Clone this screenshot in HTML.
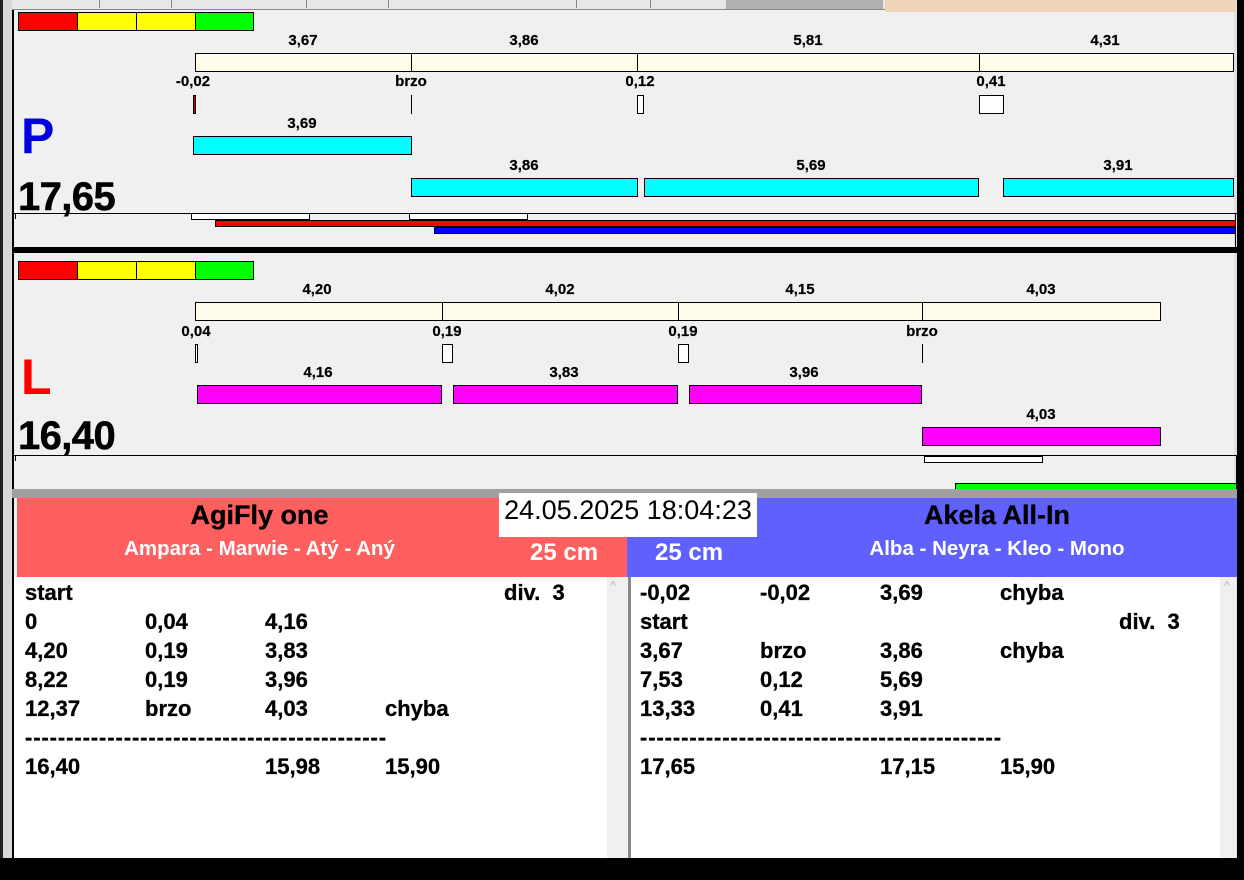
<!DOCTYPE html>
<html><head><meta charset="utf-8"><style>
*{margin:0;padding:0;box-sizing:border-box}
body{width:1244px;height:880px;background:#f0f0f0;position:relative;overflow:hidden;font-family:"Liberation Sans",Arial,sans-serif;font-weight:bold;color:#000}
div{position:absolute}
.b{border:1px solid #000}
.cr{background:#fffdea}
.cy{background:#00ffff}
.mg{background:#ff00ff}
.lb{font-size:15px;width:100px;text-align:center;line-height:17px;-webkit-text-stroke:0.2px #000}
.big{font-size:40px;letter-spacing:-0.6px;line-height:40px;-webkit-text-stroke:0.5px #000}
.row{font-size:22px;line-height:24px;-webkit-text-stroke:0.3px #000}
.dash{letter-spacing:0.9px}
</style></head><body>
<!-- left border -->
<div style="left:0;top:0;width:3px;height:880px;background:#222"></div>
<div style="left:3px;top:0;width:9px;height:880px;background:#d8d8d8"></div>
<div style="left:12px;top:10px;width:2px;height:848px;background:#000"></div>
<div style="left:1236px;top:0;width:8px;height:880px;background:#000"></div>
<div style="left:1234px;top:0;width:3px;height:880px;background:#e0e0e0"></div>
<!-- top tabs -->
<div style="left:12px;top:0;width:873px;height:10px;background:#e8e8e8;border-bottom:1px solid #888"></div>
<div style="left:99px;top:0;width:1px;height:8px;background:#888"></div>
<div style="left:171px;top:0;width:1px;height:8px;background:#888"></div>
<div style="left:306px;top:0;width:1px;height:8px;background:#888"></div>
<div style="left:388px;top:0;width:1px;height:8px;background:#888"></div>
<div style="left:576px;top:0;width:1px;height:8px;background:#888"></div>
<div style="left:650px;top:0;width:1px;height:8px;background:#888"></div>
<div style="left:726px;top:0;width:157px;height:9px;background:#b0b0b0"></div>
<div style="left:885px;top:0;width:350px;height:12px;background:#f0d4b8"></div>

<!-- TOP PANEL P -->
<div class="b" style="left:18px;top:12px;width:60px;height:19px;background:#f00"></div>
<div class="b" style="left:77px;top:12px;width:60px;height:19px;background:#ff0"></div>
<div class="b" style="left:136px;top:12px;width:60px;height:19px;background:#ff0"></div>
<div class="b" style="left:195px;top:12px;width:59px;height:19px;background:#0f0"></div>

<div class="lb" style="left:253px;top:32px">3,67</div>
<div class="lb" style="left:474px;top:32px">3,86</div>
<div class="lb" style="left:758px;top:32px">5,81</div>
<div class="lb" style="left:1055px;top:32px">4,31</div>
<div class="b cr" style="left:195px;top:53px;width:217px;height:19px"></div>
<div class="b cr" style="left:411px;top:53px;width:227px;height:19px"></div>
<div class="b cr" style="left:637px;top:53px;width:343px;height:19px"></div>
<div class="b cr" style="left:979px;top:53px;width:255px;height:19px"></div>

<div class="lb" style="left:143px;top:73px">-0,02</div>
<div class="lb" style="left:361px;top:73px">brzo</div>
<div class="lb" style="left:590px;top:73px">0,12</div>
<div class="lb" style="left:941px;top:73px">0,41</div>
<div class="b" style="left:193px;top:95px;width:3px;height:19px;background:#c00"></div>
<div style="left:411px;top:95px;width:1px;height:19px;background:#000"></div>
<div class="b" style="left:637px;top:95px;width:7px;height:19px;background:#fff"></div>
<div class="b" style="left:979px;top:95px;width:25px;height:19px;background:#fff"></div>

<div style="left:21px;top:108px;font-size:50px;color:#0000e0;line-height:56px">P</div>
<div class="lb" style="left:252px;top:115px">3,69</div>
<div class="b cy" style="left:193px;top:136px;width:219px;height:19px"></div>
<div class="lb" style="left:474px;top:157px">3,86</div>
<div class="lb" style="left:761px;top:157px">5,69</div>
<div class="lb" style="left:1068px;top:157px">3,91</div>
<div class="b cy" style="left:411px;top:178px;width:227px;height:19px"></div>
<div class="b cy" style="left:644px;top:178px;width:335px;height:19px"></div>
<div class="b cy" style="left:1003px;top:178px;width:231px;height:19px"></div>
<div class="big" style="left:18px;top:177px">17,65</div>

<div style="left:14px;top:213px;width:1223px;height:1px;background:#000"></div>
<div style="left:15px;top:213px;width:1px;height:6px;background:#000"></div>
<div class="b" style="left:191px;top:213px;width:119px;height:7px;background:#fff"></div>
<div class="b" style="left:409px;top:213px;width:119px;height:7px;background:#fff"></div>
<div class="b" style="left:215px;top:220px;width:1021px;height:7px;background:#f00"></div>
<div class="b" style="left:434px;top:227px;width:802px;height:7px;background:#00f"></div>
<div style="left:1235px;top:213px;width:1px;height:34px;background:#000"></div>
<div style="left:14px;top:247px;width:1223px;height:6px;background:#000"></div>

<!-- BOTTOM PANEL L -->
<div class="b" style="left:18px;top:261px;width:60px;height:19px;background:#f00"></div>
<div class="b" style="left:77px;top:261px;width:60px;height:19px;background:#ff0"></div>
<div class="b" style="left:136px;top:261px;width:60px;height:19px;background:#ff0"></div>
<div class="b" style="left:195px;top:261px;width:59px;height:19px;background:#0f0"></div>

<div class="lb" style="left:267px;top:281px">4,20</div>
<div class="lb" style="left:510px;top:281px">4,02</div>
<div class="lb" style="left:750px;top:281px">4,15</div>
<div class="lb" style="left:991px;top:281px">4,03</div>
<div class="b cr" style="left:195px;top:302px;width:248px;height:19px"></div>
<div class="b cr" style="left:442px;top:302px;width:237px;height:19px"></div>
<div class="b cr" style="left:678px;top:302px;width:245px;height:19px"></div>
<div class="b cr" style="left:922px;top:302px;width:239px;height:19px"></div>

<div class="lb" style="left:146px;top:323px">0,04</div>
<div class="lb" style="left:397px;top:323px">0,19</div>
<div class="lb" style="left:633px;top:323px">0,19</div>
<div class="lb" style="left:872px;top:323px">brzo</div>
<div class="b" style="left:195px;top:344px;width:3px;height:19px;background:#fff"></div>
<div class="b" style="left:442px;top:344px;width:11px;height:19px;background:#fff"></div>
<div class="b" style="left:678px;top:344px;width:11px;height:19px;background:#fff"></div>
<div style="left:922px;top:344px;width:1px;height:19px;background:#000"></div>

<div style="left:21px;top:349px;font-size:50px;color:#f00;line-height:56px">L</div>
<div class="lb" style="left:268px;top:364px">4,16</div>
<div class="lb" style="left:514px;top:364px">3,83</div>
<div class="lb" style="left:754px;top:364px">3,96</div>
<div class="b mg" style="left:197px;top:385px;width:245px;height:19px"></div>
<div class="b mg" style="left:453px;top:385px;width:225px;height:19px"></div>
<div class="b mg" style="left:689px;top:385px;width:233px;height:19px"></div>
<div class="lb" style="left:991px;top:406px">4,03</div>
<div class="b mg" style="left:922px;top:427px;width:239px;height:19px"></div>
<div class="big" style="left:18px;top:416px">16,40</div>

<div style="left:14px;top:455px;width:1223px;height:1px;background:#000"></div>
<div style="left:15px;top:455px;width:1px;height:6px;background:#000"></div>
<div class="b" style="left:924px;top:456px;width:119px;height:7px;background:#fff"></div>
<div class="b" style="left:955px;top:483px;width:282px;height:7px;background:#0f0"></div>
<div style="left:1236px;top:455px;width:1px;height:34px;background:#000"></div>
<div style="left:12px;top:489px;width:1225px;height:9px;background:#a0a0a0"></div>

<!-- HEADERS -->
<div style="left:17px;top:498px;width:610px;height:79px;background:#ff5f5f"></div>
<div style="left:627px;top:498px;width:610px;height:79px;background:#6060ff"></div>
<div style="left:17px;top:499px;width:485px;text-align:center;font-size:27px;line-height:32px;-webkit-text-stroke:0.3px #000">AgiFly one</div>
<div style="left:17px;top:537px;width:485px;text-align:center;font-size:20.5px;color:#fff;line-height:24px">Ampara - Marwie - Atý - Aný</div>
<div style="left:757px;top:499px;width:480px;text-align:center;font-size:27px;line-height:32px;-webkit-text-stroke:0.3px #000">Akela All-In</div>
<div style="left:757px;top:537px;width:480px;text-align:center;font-size:20.5px;color:#fff;line-height:24px">Alba - Neyra - Kleo - Mono</div>
<div style="left:499px;top:493px;width:258px;height:44px;background:#fff;font-weight:normal;font-size:27px;line-height:34px;text-align:center">24.05.2025 18:04:23</div>
<div style="left:530px;top:539px;font-size:24px;color:#fff;line-height:28px">25 cm</div>
<div style="left:655px;top:539px;font-size:24px;color:#fff;line-height:28px">25 cm</div>

<!-- LISTS -->
<div style="left:14px;top:577px;width:3px;height:281px;background:#fff"></div>
<div style="left:17px;top:577px;width:590px;height:281px;background:#fff"></div>
<div style="left:607px;top:577px;width:15px;height:281px;background:#f0f0f0"></div>
<div style="left:610px;top:580px;font-size:10px;color:#bbb">^</div>
<div style="left:622px;top:577px;width:9px;height:281px;background:#f0f0f0;border-left:3px solid #f0f0f0;border-right:3px solid #888"></div>
<div style="left:631px;top:577px;width:589px;height:281px;background:#fff"></div>
<div style="left:1220px;top:577px;width:16px;height:281px;background:#f0f0f0"></div>
<div style="left:1224px;top:580px;font-size:10px;color:#bbb">^</div>

<div class="row" style="left:25px;top:581px">start</div>
<div class="row" style="left:504px;top:581px">div.&nbsp; 3</div>
<div class="row" style="left:25px;top:610px">0</div><div class="row" style="left:145px;top:610px">0,04</div><div class="row" style="left:265px;top:610px">4,16</div>
<div class="row" style="left:25px;top:639px">4,20</div><div class="row" style="left:145px;top:639px">0,19</div><div class="row" style="left:265px;top:639px">3,83</div>
<div class="row" style="left:25px;top:668px">8,22</div><div class="row" style="left:145px;top:668px">0,19</div><div class="row" style="left:265px;top:668px">3,96</div>
<div class="row" style="left:25px;top:697px">12,37</div><div class="row" style="left:145px;top:697px">brzo</div><div class="row" style="left:265px;top:697px">4,03</div><div class="row" style="left:385px;top:697px">chyba</div>
<div class="row dash" style="left:25px;top:726px">--------------------------------------------</div>
<div class="row" style="left:25px;top:755px">16,40</div><div class="row" style="left:265px;top:755px">15,98</div><div class="row" style="left:385px;top:755px">15,90</div>

<div class="row" style="left:640px;top:581px">-0,02</div><div class="row" style="left:760px;top:581px">-0,02</div><div class="row" style="left:880px;top:581px">3,69</div><div class="row" style="left:1000px;top:581px">chyba</div>
<div class="row" style="left:640px;top:610px">start</div><div class="row" style="left:1119px;top:610px">div.&nbsp; 3</div>
<div class="row" style="left:640px;top:639px">3,67</div><div class="row" style="left:760px;top:639px">brzo</div><div class="row" style="left:880px;top:639px">3,86</div><div class="row" style="left:1000px;top:639px">chyba</div>
<div class="row" style="left:640px;top:668px">7,53</div><div class="row" style="left:760px;top:668px">0,12</div><div class="row" style="left:880px;top:668px">5,69</div>
<div class="row" style="left:640px;top:697px">13,33</div><div class="row" style="left:760px;top:697px">0,41</div><div class="row" style="left:880px;top:697px">3,91</div>
<div class="row dash" style="left:640px;top:726px">--------------------------------------------</div>
<div class="row" style="left:640px;top:755px">17,65</div><div class="row" style="left:880px;top:755px">17,15</div><div class="row" style="left:1000px;top:755px">15,90</div>

<div style="left:0;top:858px;width:1244px;height:22px;background:#000"></div>
</body></html>
